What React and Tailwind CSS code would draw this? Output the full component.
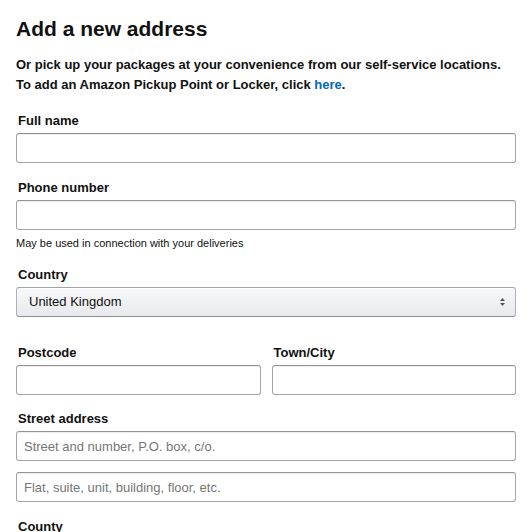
import React from 'react'

const inputClass =
    'block w-full h-[30px] px-[7px] bg-white border border-[#a6a6a6] border-t-[#949494] rounded-[3px] text-[13px] text-[#111] placeholder:text-[#767676] shadow-[0_1px_0_rgba(255,255,255,0.5),0_1px_0_rgba(0,0,0,0.07)_inset] focus:outline-none'

const Label = ({ children, className = '' }) => (
    <label className={`block text-[13px] leading-[19px] font-bold text-[#111] pl-[2px] mb-[3px] ${className}`}>{children}</label>
)

const SelectArrows = () => (
    <svg width="7" height="10" viewBox="0 0 7 10" className="shrink-0">
        <path d="M3.5 1 L6 4 L1 4 Z" fill="#555" />
        <path d="M3.5 9 L6 6 L1 6 Z" fill="#555" />
    </svg>
)

const App = () => {
    return (
        <div className="w-[532px] h-[532px] overflow-hidden bg-white px-4 pt-4 font-['Liberation_Sans',Arial,sans-serif] text-[#111]">
            <h1 className="text-[21px] leading-[25px] font-bold">Add a new address</h1>

            <p className="mt-[14px] text-[13px] leading-[20px] font-bold">
                Or pick up your packages at your convenience from our self-service locations.
                <br />
                To add an Amazon Pickup Point or Locker, click <a href="#" className="text-[#0066c0]">here</a>.
            </p>

            {/* Full name */}
            <div className="mt-[16px]">
                <Label>Full name</Label>
                <input type="text" className={inputClass} />
            </div>

            {/* Phone */}
            <div className="mt-[15px]">
                <Label>Phone number</Label>
                <input type="tel" className={inputClass} />
                <p className="mt-[6px] text-[11px] leading-[14px] text-[#111]">May be used in connection with your deliveries</p>
            </div>

            {/* Country */}
            <div className="mt-[15px]">
                <Label>Country</Label>
                <div className="flex items-center justify-between h-[30px] pl-3 pr-[9px] rounded-[3px] border border-[#adb1b8] border-t-[#a2a6ac] border-b-[#8d9096] bg-gradient-to-b from-[#f7f8fa] to-[#e7e9ec] shadow-[0_1px_0_rgba(255,255,255,0.6)_inset]">
                    <span className="text-[13px] text-[#111]">United Kingdom</span>
                    <SelectArrows />
                </div>
            </div>

            {/* Postcode / Town */}
            <div className="mt-[26px] grid grid-cols-2 gap-[11px]">
                <div>
                    <Label>Postcode</Label>
                    <input type="text" className={inputClass} />
                </div>
                <div>
                    <Label>Town/City</Label>
                    <input type="text" className={inputClass} />
                </div>
            </div>

            {/* Street */}
            <div className="mt-[14px]">
                <Label>Street address</Label>
                <div className="flex flex-col gap-[11px]">
                    <input type="text" placeholder="Street and number, P.O. box, c/o." className={inputClass} />
                    <input type="text" placeholder="Flat, suite, unit, building, floor, etc." className={inputClass} />
                </div>
            </div>

            {/* County */}
            <div className="mt-[15px]">
                <Label>County</Label>
                <input type="text" className={inputClass} />
            </div>
        </div>
    )
}

export default App
